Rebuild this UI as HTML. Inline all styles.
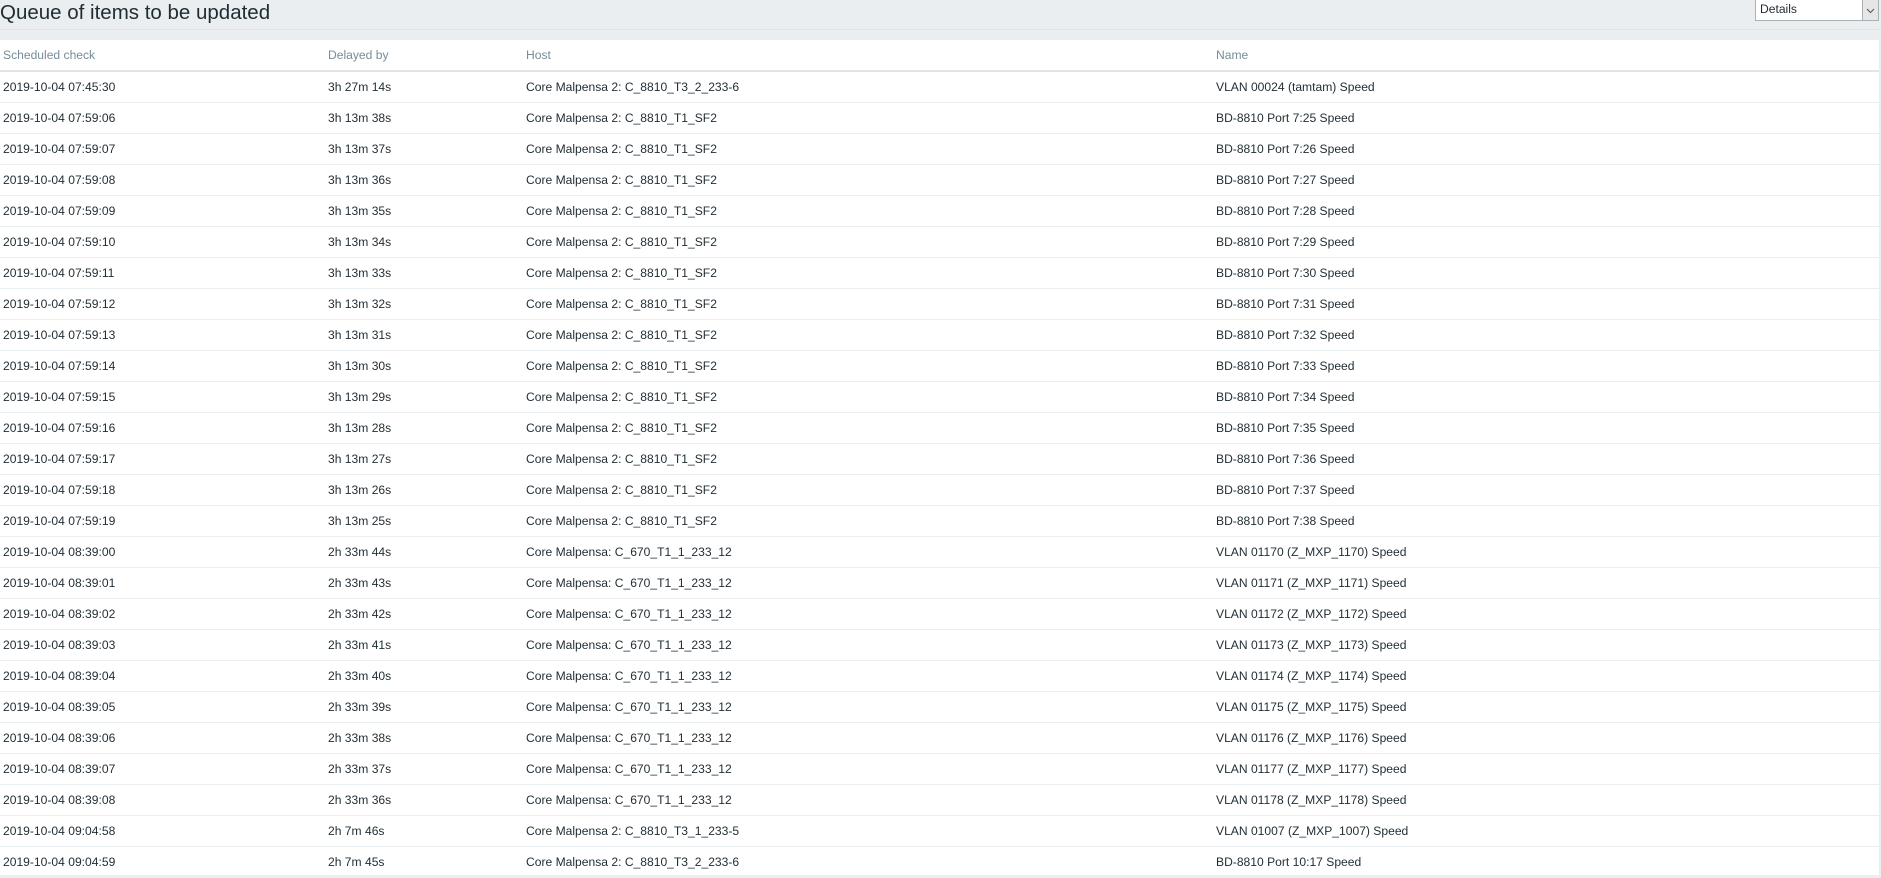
<!DOCTYPE html>
<html><head><meta charset="utf-8"><style>
body{margin:0;width:1881px;height:875px;overflow:hidden;background:#ebeef0;font-family:"Liberation Sans",Arial,sans-serif;position:relative}
.title{position:absolute;left:0;top:0;font-size:20.5px;line-height:26px;color:#1f2c33}
.band{position:absolute;left:0;top:29px;width:1881px;height:1px;background:#dfe4e7}
.sel{position:absolute;left:1755px;top:0;width:122px;height:20px;background:#fff;border:1px solid #a9b1b5;border-top:none;font-size:12.1px;line-height:19px;color:#1f2c33}
.sel span{padding-left:4px}
.sel .ar{position:absolute;right:0;top:0;width:15px;height:20px;background:#e6e6e6;border-left:1px solid #a9b1b5}
.tbl{position:absolute;left:0;top:40px;width:1879px;height:835px;background:#fff}
.hd{position:absolute;left:0;top:0;width:1879px;height:30px;border-bottom:2px solid #dfe4e7;font-size:12.1px;color:#768d99}
.r{position:absolute;left:0;width:1879px;height:30px;border-bottom:1px solid #ebeef0;font-size:12.1px;color:#1f2c33}
.c{position:absolute;top:0;line-height:30px;white-space:nowrap}
.a{left:3px}.b{left:328px}.h{left:526px}.n{left:1216px}
</style></head><body>
<div class="title">Queue of items to be updated</div>
<div class="band"></div>
<div class="sel"><span>Details</span><div class="ar"><svg width="15" height="20"><path d="M4 9l3.5 3.5L11 9" fill="none" stroke="#555" stroke-width="1"/></svg></div></div>
<div class="tbl">
<div class="hd"><div class="c a">Scheduled check</div><div class="c b">Delayed by</div><div class="c h">Host</div><div class="c n">Name</div></div>
</div>
<div style="position:absolute;left:0;top:72px">
<div class="r" style="top:0"><div class="c a">2019-10-04 07:45:30</div><div class="c b">3h 27m 14s</div><div class="c h">Core Malpensa 2: C_8810_T3_2_233-6</div><div class="c n">VLAN 00024 (tamtam) Speed</div></div>
<div class="r" style="top:31px"><div class="c a">2019-10-04 07:59:06</div><div class="c b">3h 13m 38s</div><div class="c h">Core Malpensa 2: C_8810_T1_SF2</div><div class="c n">BD-8810 Port 7:25 Speed</div></div>
<div class="r" style="top:62px"><div class="c a">2019-10-04 07:59:07</div><div class="c b">3h 13m 37s</div><div class="c h">Core Malpensa 2: C_8810_T1_SF2</div><div class="c n">BD-8810 Port 7:26 Speed</div></div>
<div class="r" style="top:93px"><div class="c a">2019-10-04 07:59:08</div><div class="c b">3h 13m 36s</div><div class="c h">Core Malpensa 2: C_8810_T1_SF2</div><div class="c n">BD-8810 Port 7:27 Speed</div></div>
<div class="r" style="top:124px"><div class="c a">2019-10-04 07:59:09</div><div class="c b">3h 13m 35s</div><div class="c h">Core Malpensa 2: C_8810_T1_SF2</div><div class="c n">BD-8810 Port 7:28 Speed</div></div>
<div class="r" style="top:155px"><div class="c a">2019-10-04 07:59:10</div><div class="c b">3h 13m 34s</div><div class="c h">Core Malpensa 2: C_8810_T1_SF2</div><div class="c n">BD-8810 Port 7:29 Speed</div></div>
<div class="r" style="top:186px"><div class="c a">2019-10-04 07:59:11</div><div class="c b">3h 13m 33s</div><div class="c h">Core Malpensa 2: C_8810_T1_SF2</div><div class="c n">BD-8810 Port 7:30 Speed</div></div>
<div class="r" style="top:217px"><div class="c a">2019-10-04 07:59:12</div><div class="c b">3h 13m 32s</div><div class="c h">Core Malpensa 2: C_8810_T1_SF2</div><div class="c n">BD-8810 Port 7:31 Speed</div></div>
<div class="r" style="top:248px"><div class="c a">2019-10-04 07:59:13</div><div class="c b">3h 13m 31s</div><div class="c h">Core Malpensa 2: C_8810_T1_SF2</div><div class="c n">BD-8810 Port 7:32 Speed</div></div>
<div class="r" style="top:279px"><div class="c a">2019-10-04 07:59:14</div><div class="c b">3h 13m 30s</div><div class="c h">Core Malpensa 2: C_8810_T1_SF2</div><div class="c n">BD-8810 Port 7:33 Speed</div></div>
<div class="r" style="top:310px"><div class="c a">2019-10-04 07:59:15</div><div class="c b">3h 13m 29s</div><div class="c h">Core Malpensa 2: C_8810_T1_SF2</div><div class="c n">BD-8810 Port 7:34 Speed</div></div>
<div class="r" style="top:341px"><div class="c a">2019-10-04 07:59:16</div><div class="c b">3h 13m 28s</div><div class="c h">Core Malpensa 2: C_8810_T1_SF2</div><div class="c n">BD-8810 Port 7:35 Speed</div></div>
<div class="r" style="top:372px"><div class="c a">2019-10-04 07:59:17</div><div class="c b">3h 13m 27s</div><div class="c h">Core Malpensa 2: C_8810_T1_SF2</div><div class="c n">BD-8810 Port 7:36 Speed</div></div>
<div class="r" style="top:403px"><div class="c a">2019-10-04 07:59:18</div><div class="c b">3h 13m 26s</div><div class="c h">Core Malpensa 2: C_8810_T1_SF2</div><div class="c n">BD-8810 Port 7:37 Speed</div></div>
<div class="r" style="top:434px"><div class="c a">2019-10-04 07:59:19</div><div class="c b">3h 13m 25s</div><div class="c h">Core Malpensa 2: C_8810_T1_SF2</div><div class="c n">BD-8810 Port 7:38 Speed</div></div>
<div class="r" style="top:465px"><div class="c a">2019-10-04 08:39:00</div><div class="c b">2h 33m 44s</div><div class="c h">Core Malpensa: C_670_T1_1_233_12</div><div class="c n">VLAN 01170 (Z_MXP_1170) Speed</div></div>
<div class="r" style="top:496px"><div class="c a">2019-10-04 08:39:01</div><div class="c b">2h 33m 43s</div><div class="c h">Core Malpensa: C_670_T1_1_233_12</div><div class="c n">VLAN 01171 (Z_MXP_1171) Speed</div></div>
<div class="r" style="top:527px"><div class="c a">2019-10-04 08:39:02</div><div class="c b">2h 33m 42s</div><div class="c h">Core Malpensa: C_670_T1_1_233_12</div><div class="c n">VLAN 01172 (Z_MXP_1172) Speed</div></div>
<div class="r" style="top:558px"><div class="c a">2019-10-04 08:39:03</div><div class="c b">2h 33m 41s</div><div class="c h">Core Malpensa: C_670_T1_1_233_12</div><div class="c n">VLAN 01173 (Z_MXP_1173) Speed</div></div>
<div class="r" style="top:589px"><div class="c a">2019-10-04 08:39:04</div><div class="c b">2h 33m 40s</div><div class="c h">Core Malpensa: C_670_T1_1_233_12</div><div class="c n">VLAN 01174 (Z_MXP_1174) Speed</div></div>
<div class="r" style="top:620px"><div class="c a">2019-10-04 08:39:05</div><div class="c b">2h 33m 39s</div><div class="c h">Core Malpensa: C_670_T1_1_233_12</div><div class="c n">VLAN 01175 (Z_MXP_1175) Speed</div></div>
<div class="r" style="top:651px"><div class="c a">2019-10-04 08:39:06</div><div class="c b">2h 33m 38s</div><div class="c h">Core Malpensa: C_670_T1_1_233_12</div><div class="c n">VLAN 01176 (Z_MXP_1176) Speed</div></div>
<div class="r" style="top:682px"><div class="c a">2019-10-04 08:39:07</div><div class="c b">2h 33m 37s</div><div class="c h">Core Malpensa: C_670_T1_1_233_12</div><div class="c n">VLAN 01177 (Z_MXP_1177) Speed</div></div>
<div class="r" style="top:713px"><div class="c a">2019-10-04 08:39:08</div><div class="c b">2h 33m 36s</div><div class="c h">Core Malpensa: C_670_T1_1_233_12</div><div class="c n">VLAN 01178 (Z_MXP_1178) Speed</div></div>
<div class="r" style="top:744px"><div class="c a">2019-10-04 09:04:58</div><div class="c b">2h 7m 46s</div><div class="c h">Core Malpensa 2: C_8810_T3_1_233-5</div><div class="c n">VLAN 01007 (Z_MXP_1007) Speed</div></div>
<div class="r" style="top:775px"><div class="c a">2019-10-04 09:04:59</div><div class="c b">2h 7m 45s</div><div class="c h">Core Malpensa 2: C_8810_T3_2_233-6</div><div class="c n">BD-8810 Port 10:17 Speed</div></div>
</div>
</body></html>
